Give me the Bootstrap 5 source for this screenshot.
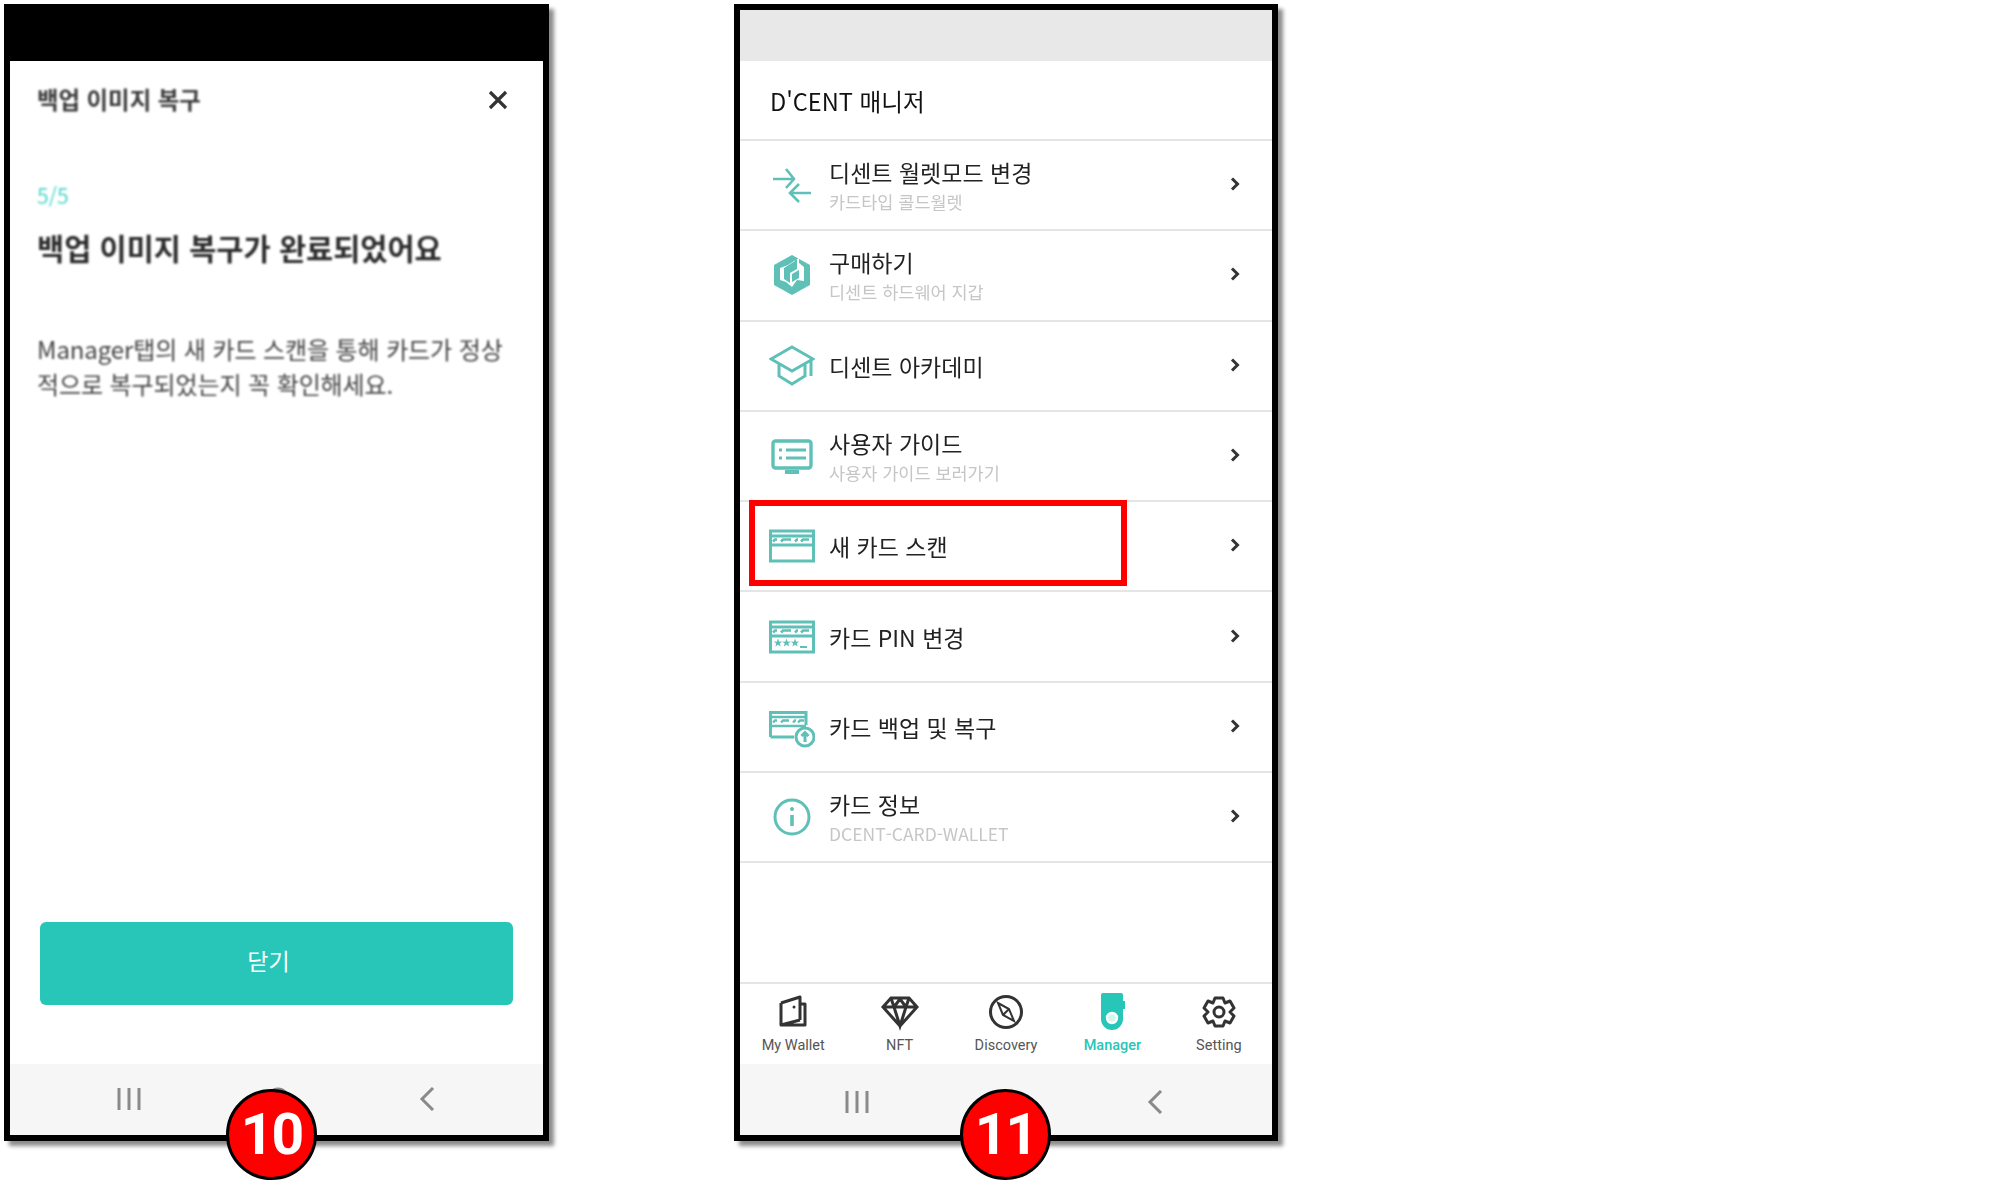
<!DOCTYPE html>
<html lang="ko">
<head>
    <meta charset="UTF-8">
    <meta name="viewport" content="width=device-width, initial-scale=1.0">
    <title>D'CENT 매니저</title>
    <link href="https://cdn.jsdelivr.net/npm/bootstrap@5.3.3/dist/css/bootstrap.min.css" rel="stylesheet">
    <style>
        body { background: #fff; font-family: "Noto Sans CJK KR", "Noto Sans", sans-serif; color: #222; width: 2006px; height: 1196px; overflow: hidden; padding: 4px 0 0 4px; }
        .phone-row { gap: 185px; }
        .phone-frame { height: 1137px; border: 6px solid #000; box-shadow: 5px 5px 4px rgba(0,0,0,.45); background: #fff; }
        .frame-left { width: 545px; }
        .frame-right { width: 544px; }
        .status-dark { height: 51px; background: #000; }
        .status-light { height: 51px; background: #e8e8e8; }
        .soft-text { filter: blur(.8px); }
        .soft-light { filter: blur(.3px); }

        /* backup finished screen */
        .done-head { height: 78px; padding: 0 27px; }
        .done-title { font-size: 23.4px; font-weight: 700; color: #3a3a3a; }
        .done-close { margin-right: 8px; }
        .done-body { padding: 0 27px; }
        .done-step { font-size: 21px; line-height: 24px; margin-top: 44px; color: #4fd6ca; }
        .done-heading { font-size: 29.5px; line-height: 40px; margin-top: 20px; font-weight: 700; color: #2c2c2c; }
        .done-text { font-size: 24px; line-height: 35px; margin-top: 64px; color: #444; letter-spacing: -.1px; }
        .btn-close-screen { width: 473px; height: 83px; margin: 0 0 59px 30px; background: #28c6b8; border: 0; border-radius: 6px; color: #fff; font-size: 23px; padding: 0 16px 6px 0; }
        .btn-close-screen:hover { background: #28c6b8; color: #fff; }

        /* manager list */
        .mgr-head { height: 78px; padding-left: 30px; font-size: 23.6px; color: #111; padding-top: 4px; }
        .mgr-list { border-top: 2px solid #e5e5e5; }
        .mgr-row { height: 90.3px; padding: 0 32px 0 29px; border-bottom: 2px solid #e5e5e5 !important; border-top: 0; border-left: 0; border-right: 0; background: transparent; }
        .mgr-icon { width: 46px; height: 46px; margin-right: 14px; flex: none; fill: none; stroke: #5fc0b8; stroke-width: 3; }
        .mgr-title { font-size: 23px; line-height: 34px; color: #222; }
        .mgr-sub { font-size: 17.5px; line-height: 26px; color: #c6c6c6; }
        .row-chevron { width: 10px; height: 14px; margin-top: -2px; fill: none; stroke: #333; stroke-width: 3; }
        .scan-mark { left: 9px; top: 490px; width: 378px; height: 86px; border: 6px solid #f00; }

        /* tabs and android bar */
        .tab-bar { height: 82px; border-top: 2px solid #e5e5e5; background: #fff; }
        .tab-item { font-family: Roboto, "Noto Sans", sans-serif; font-size: 14.5px; line-height: 18px; color: #555; padding-top: 9px; }
        .tab-item svg { width: 40px; height: 38px; display: block; margin: 0 auto 6px; }
        .tab-on { color: #28c6b8; font-weight: 500; }
        .android-bar { height: 71px; background: #f6f6f6; }
        .bar-left { padding-top: 23px; padding-left: 2px; }
        .bar-right { padding-top: 26px; }
        .android-key { width: 149px; height: 24px; }
        .android-key svg { width: 26px; height: 24px; display: block; margin: 0 auto; fill: none; stroke: #8a8a8a; stroke-width: 3; }
        .step-badge { width: 91px; height: 91px; top: 1079px; background: #f00; border: 3px solid #000; font-family: Roboto, "Noto Sans", sans-serif; font-weight: 700; font-size: 57px; letter-spacing: -2px; color: #fff; }
        .badge-ten { left: 216px; }
        .badge-eleven { left: 220px; }
    </style>
</head>
<body>
    <svg width="0" height="0" class="position-absolute">
        <defs>
            <g id="cardStripe">
                <path d="M1.5 13H44.5M1.5 22H44.5"/>
                <path d="M4 18.5 6 16.5H8M12 18.5 14 16.5H22M26 18.5 28 16.5H29M32 18.5 34 16.5H40" stroke-width="2.6"/>
            </g>
            <path id="tinyStar" d="M0-4.4 1.2-1.3 4.3-1.4 1.8.5 2.7 3.6 0 1.8-2.7 3.6-1.8.5-4.3-1.4-1.2-1.3Z" fill="#5fc0b8" stroke="none"/>
            <symbol id="chev" viewBox="0 0 10 14"><path d="M2 1.5 7.5 7 2 12.5"/></symbol>
        </defs>
    </svg>

    <div class="d-flex phone-row">
        <!-- Screen 10: backup restore finished -->
        <div class="phone-frame frame-left position-relative d-flex flex-column">
            <div class="status-dark"></div>
            <div class="done-head d-flex align-items-center justify-content-between">
                <span class="done-title soft-text">백업 이미지 복구</span>
                <svg width="20" height="20" viewBox="0 0 20 20" class="done-close" fill="none" stroke="#333" stroke-width="3.2"><path d="M2 2 18 18M18 2 2 18"/></svg>
            </div>
            <div class="done-body flex-grow-1">
                <div class="done-step soft-text">5/5</div>
                <div class="done-heading soft-text">백업 이미지 복구가 완료되었어요</div>
                <div class="done-text soft-text">Manager탭의 새 카드 스캔을 통해 카드가 정상<br>적으로 복구되었는지 꼭 확인해세요.</div>
            </div>
            <button type="button" class="btn btn-close-screen">닫기</button>
            <div class="android-bar bar-left d-flex justify-content-center">
                <div class="android-key"><svg viewBox="0 0 26 24"><path d="M3 1V23M13 1V23M23 1V23"/></svg></div>
                <div class="android-key"><svg viewBox="0 0 26 24"><circle cx="13" cy="12" r="10"/></svg></div>
                <div class="android-key"><svg viewBox="0 0 26 24"><path d="M19 1 8 12 19 23"/></svg></div>
            </div>
            <div class="step-badge badge-ten position-absolute rounded-circle d-flex align-items-center justify-content-center">10</div>
        </div>

        <!-- Screen 11: manager menu -->
        <div class="phone-frame frame-right position-relative d-flex flex-column">
            <div class="status-light"></div>
            <div class="mgr-head d-flex align-items-center soft-light">D'CENT 매니저</div>
            <div class="list-group list-group-flush mgr-list flex-grow-1">
                <div class="list-group-item mgr-row d-flex align-items-center">
                    <svg class="mgr-icon" viewBox="0 0 46 46"><path d="M4 17H25M17 7 25 17 17 26M42 31H21M30 22 21 31 30 40" stroke-width="2.6"/></svg>
                    <div class="flex-grow-1 soft-light"><div class="mgr-title">디센트 월렛모드 변경</div><div class="mgr-sub">카드타입 콜드월렛</div></div>
                    <svg class="row-chevron"><use href="#chev"/></svg>
                </div>
                <div class="list-group-item mgr-row d-flex align-items-center">
                    <svg class="mgr-icon" viewBox="0 0 46 46">
                        <path d="M23 3 41 13V33L23 43 5 33V13Z" fill="#5fc0b8" stroke="none"/>
                        <path d="M25 9 30 6V11L35 15V29L28 28 23 35 17 30 11 28V16L19 13Z" fill="#fff" stroke="none"/>
                        <path d="M26 5 28 8V17L21 21V31L15 27V16L26 9ZM23 22 30 18V26L23 30Z" fill="#5fc0b8" stroke="none"/>
                    </svg>
                    <div class="flex-grow-1 soft-light"><div class="mgr-title">구매하기</div><div class="mgr-sub">디센트 하드웨어 지갑</div></div>
                    <svg class="row-chevron"><use href="#chev"/></svg>
                </div>
                <div class="list-group-item mgr-row d-flex align-items-center">
                    <svg class="mgr-icon" viewBox="0 0 46 46" stroke-width="3.4"><path d="M23 4 44 16 23 28 2 16ZM10 21V33L23 41 36 33V21M42 16V33"/></svg>
                    <div class="flex-grow-1 soft-light"><div class="mgr-title">디센트 아카데미</div></div>
                    <svg class="row-chevron"><use href="#chev"/></svg>
                </div>
                <div class="list-group-item mgr-row d-flex align-items-center">
                    <svg class="mgr-icon" viewBox="0 0 46 46">
                        <rect x="4" y="8" width="38" height="27" rx="2.5" stroke-width="3.4"/>
                        <path d="M10 17H13M17 17H37M10 25H13M17 25H37" stroke-width="3.2"/>
                        <path d="M16 37H30V41H16Z" fill="#5fc0b8" stroke="none"/>
                    </svg>
                    <div class="flex-grow-1 soft-light"><div class="mgr-title">사용자 가이드</div><div class="mgr-sub">사용자 가이드 보러가기</div></div>
                    <svg class="row-chevron"><use href="#chev"/></svg>
                </div>
                <div class="list-group-item mgr-row d-flex align-items-center">
                    <svg class="mgr-icon" viewBox="0 0 46 46"><rect x="1.5" y="8" width="43" height="30"/><use href="#cardStripe"/></svg>
                    <div class="flex-grow-1 soft-light"><div class="mgr-title">새 카드 스캔</div></div>
                    <svg class="row-chevron"><use href="#chev"/></svg>
                </div>
                <div class="list-group-item mgr-row d-flex align-items-center">
                    <svg class="mgr-icon" viewBox="0 0 46 46">
                        <rect x="1.5" y="8" width="43" height="30"/><use href="#cardStripe"/>
                        <use href="#tinyStar" x="9" y="29"/><use href="#tinyStar" x="17.5" y="29"/><use href="#tinyStar" x="26" y="29"/>
                        <path d="M31 33H38" stroke-width="2"/>
                    </svg>
                    <div class="flex-grow-1 soft-light"><div class="mgr-title">카드 PIN 변경</div></div>
                    <svg class="row-chevron"><use href="#chev"/></svg>
                </div>
                <div class="list-group-item mgr-row d-flex align-items-center">
                    <svg class="mgr-icon" viewBox="0 0 46 46">
                        <path d="M1.5 33V8.5H37V21M1.5 33H25"/>
                        <path d="M1.5 13H37M1.5 22H37" stroke-width="2.4"/>
                        <path d="M4 18.5 6 16.5H8M12 18.5 14 16.5H20M24 18.5 26 16.5H27M29 18.5 31 16.5H35" stroke-width="2.4"/>
                        <circle cx="36" cy="33" r="9" fill="#fff"/><path d="M36 38V29M32.5 32 36 28.5 39.5 32"/>
                    </svg>
                    <div class="flex-grow-1 soft-light"><div class="mgr-title">카드 백업 및 복구</div></div>
                    <svg class="row-chevron"><use href="#chev"/></svg>
                </div>
                <div class="list-group-item mgr-row d-flex align-items-center">
                    <svg class="mgr-icon" viewBox="0 0 46 46" stroke-width="3.4">
                        <circle cx="23" cy="23" r="17"/><path d="M23 21V32" stroke-width="3.6"/><circle cx="23" cy="15" r="1.5" fill="#5fc0b8" stroke-width="1"/>
                    </svg>
                    <div class="flex-grow-1 soft-light"><div class="mgr-title">카드 정보</div><div class="mgr-sub">DCENT-CARD-WALLET</div></div>
                    <svg class="row-chevron"><use href="#chev"/></svg>
                </div>
            </div>
            <div class="tab-bar d-flex">
                <div class="tab-item flex-fill text-center w-100">
                    <svg viewBox="0 0 40 38" fill="none" stroke="#333" stroke-width="3"><path d="M8 10 27 4V27M8 10V32H32V11H27M8 32 27 27" stroke-linejoin="round"/><circle cx="21" cy="14" r="1.5" fill="#333" stroke="none"/></svg>
                    My Wallet
                </div>
                <div class="tab-item flex-fill text-center w-100">
                    <svg viewBox="0 0 40 38" fill="none" stroke="#333" stroke-width="3"><path d="M11 5H29L37 14 20 33 3 14ZM3 14H37M14 14 20 33 26 14M11 5 14 14 20 6 26 14 29 5"/></svg>
                    NFT
                </div>
                <div class="tab-item flex-fill text-center w-100">
                    <svg viewBox="0 0 40 38" fill="none" stroke="#333" stroke-width="3"><circle cx="20" cy="19" r="15.5"/><path d="M12 10 23 16 28 28 17 22ZM17 22 23 16" stroke-width="2"/></svg>
                    Discovery
                </div>
                <div class="tab-item tab-on flex-fill text-center w-100">
                    <svg viewBox="0 0 40 38"><path d="M9 2Q9 0 11 0H29Q31 0 31 2V8H33V16H31V26A11 11 0 0 1 9 26Z" fill="#28c6b8"/><circle cx="20" cy="25" r="5" fill="#d4f5f1" stroke="#fff" stroke-width="2.4"/></svg>
                    Manager
                </div>
                <div class="tab-item flex-fill text-center w-100">
                    <svg viewBox="0 0 40 38" fill="none" stroke="#333" stroke-width="3"><path d="M16 5H24L26 10 31 8 35 15 31 19 35 23 31 30 26 28 24 33H16L14 28 9 30 5 23 9 19 5 15 9 8 14 10Z" stroke-linejoin="round"/><circle cx="20" cy="19" r="5"/></svg>
                    Setting
                </div>
            </div>
            <div class="android-bar bar-right d-flex justify-content-center">
                <div class="android-key"><svg viewBox="0 0 26 24"><path d="M3 1V23M13 1V23M23 1V23"/></svg></div>
                <div class="android-key"><svg viewBox="0 0 26 24"><circle cx="13" cy="12" r="10"/></svg></div>
                <div class="android-key"><svg viewBox="0 0 26 24"><path d="M19 1 8 12 19 23"/></svg></div>
            </div>
            <div class="scan-mark position-absolute"></div>
            <div class="step-badge badge-eleven position-absolute rounded-circle d-flex align-items-center justify-content-center">11</div>
        </div>
    </div>

    <script src="https://cdn.jsdelivr.net/npm/bootstrap@5.3.3/dist/js/bootstrap.bundle.min.js"></script>
</body>
</html>
